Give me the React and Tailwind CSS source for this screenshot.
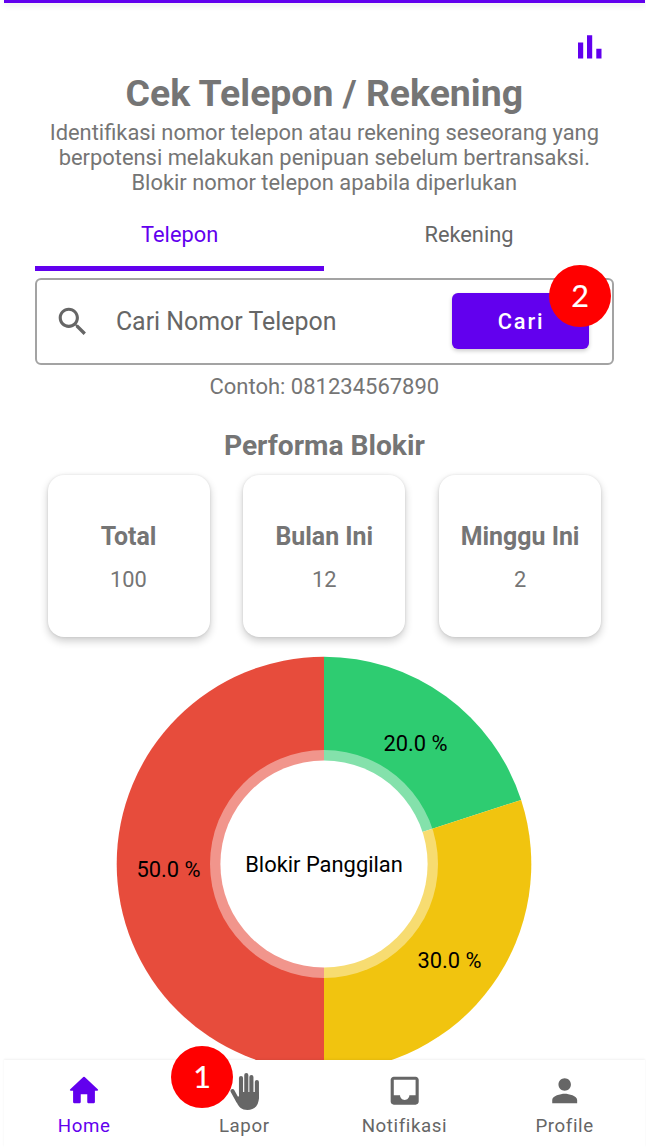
import React from "react";

const INK = "text-[#757575]";

function Badge({ children, className }) {
  return (
    <span
      className={`absolute z-20 flex h-[62px] w-[62px] items-center justify-center rounded-full bg-[#ff0000] pb-[1px] font-['Lato',sans-serif] text-[30.5px] leading-none text-white [-webkit-text-stroke:0.2px_white] ${className}`}
    >
      {children}
    </span>
  );
}

function StatCard({ title, value }) {
  return (
    <div className="flex h-[162px] w-[162px] flex-col items-center rounded-[16px] bg-white pt-[47px] shadow-[0_4px_8px_rgba(0,0,0,0.2),0_0_3px_rgba(0,0,0,0.1)]">
      <div className="text-[24.9px] leading-[29px] font-bold whitespace-nowrap">{title}</div>
      <div className="mt-[16px] text-[21.8px] leading-[26px]">{value}</div>
    </div>
  );
}

function Donut() {
  return (
    <svg className="block h-[416px] w-[416px]" viewBox="-208 -208 416 416">
      <path d="M0 0V-207.3A207.3 207.3 0 0 0 0 207.3Z" fill="#e74c3c" />
      <path d="M0 0V-207.3A207.3 207.3 0 0 1 197.15 -64.06Z" fill="#2ecc71" />
      <path d="M0 0L197.15 -64.06A207.3 207.3 0 0 1 0 207.3Z" fill="#f1c40f" />
      <circle r="114" fill="#fff" fillOpacity="0.41" />
      <circle r="103.6" fill="#fff" />
      <g fontSize="21.9" textAnchor="middle" fill="#000">
        <text x="91.5" y="-113.5">20.0 %</text>
        <text x="125.5" y="103.5">30.0 %</text>
        <text x="-155.5" y="12.5">50.0 %</text>
        <text x="0" y="7.5">Blokir Panggilan</text>
      </g>
    </svg>
  );
}

function NavItem({ label, active, children, badge }) {
  return (
    <div className={`relative flex flex-1 flex-col items-center pt-[12px] ${active ? "text-[#6200ee]" : "text-[#666666]"}`}>
      <div className="flex h-[38px] items-center justify-center">{children}</div>
      <div className="mt-[5px] text-[18.7px] leading-[22px] tracking-[0.6px]">{label}</div>
      {badge}
    </div>
  );
}

function Icon({ d, className }) {
  return (
    <svg viewBox="0 0 24 24" preserveAspectRatio="none" fill="currentColor" className={className}>
      <path d={d} />
    </svg>
  );
}

export default function App() {
  return (
    <div className={`flex h-[1147px] w-[646px] flex-col overflow-hidden bg-white pr-[1.4px] pl-[4px] font-['Roboto',sans-serif] ${INK}`}>
      <div className="h-[2.5px] shrink-0 bg-[#6200ee] shadow-[0_2px_6px_rgba(0,0,0,0.12)]" />
      <main className="flex h-[1057px] shrink-0 flex-col overflow-hidden">
        <div className="flex h-[68px] shrink-0 justify-end pt-[32.5px] pr-[42.5px]">
          <Icon className="h-[24px] w-[24px] text-[#6200ee]" d="M0 7.500h5.200v16H0zM9 .3h5.200v23.200H9zM18.300 13.700h5.200v9.800h-5.200z" />
        </div>
        <h1 className="text-center text-[37.4px] leading-[44px] font-bold">Cek Telepon / Rekening</h1>
        <p className="mt-[5px] text-center text-[21.9px] leading-[25.4px]">
          Identifikasi nomor telepon atau rekening seseorang yang
          <br />
          berpotensi melakukan penipuan sebelum bertransaksi.
          <br />
          Blokir nomor telepon apabila diperlukan
        </p>
        <div className="mt-[4px] flex h-[71px] shrink-0 px-[31px] text-center text-[21.8px] leading-[70px]">
          <div className="h-full flex-1 border-b-[5px] border-[#6200ee] text-[#6200ee]">Telepon</div>
          <div className="flex-1 text-[#666666]">Rekening</div>
        </div>
        <div className="relative mx-[31px] mt-[7px] flex h-[87px] shrink-0 items-center rounded-[6px] border-2 border-[#a3a3a3] pl-[16.5px]">
          <Icon
            className="h-[37.4px] w-[37.4px] text-[#666666]"
            d="M15.5 14h-.79l-.28-.27C15.41 12.59 16 11.11 16 9.5 16 5.91 13.09 3 9.5 3S3 5.91 3 9.5 5.91 16 9.5 16c1.61 0 3.09-.59 4.23-1.57l.27.28v.79l5 4.99L20.49 19l-4.99-5zm-6 0C7.01 14 5 11.99 5 9.5S7.01 5 9.5 5 14 7.01 14 9.5 11.99 14 9.5 14z"
          />
          <span className="ml-[25px] flex-1 text-[24.9px] text-[#666666]">Cari Nomor Telepon</span>
          <button className="mr-[23px] h-[56px] w-[137px] rounded-[6px] bg-[#6200ee] pt-[2px] pl-[2px] text-[21.8px] font-medium tracking-[1.9px] text-white shadow-[0_2px_4px_rgba(0,0,0,0.2)]">
            Cari
          </button>
          <Badge className="-top-[15px] right-[0.5px]">2</Badge>
        </div>
        <div className="mt-[9px] text-center text-[22px] leading-[26px]">Contoh: 081234567890</div>
        <h2 className="mt-[29px] text-center text-[28.2px] leading-[33px] font-bold">Performa Blokir</h2>
        <div className="mt-[13px] flex shrink-0 justify-between pr-[43.5px] pl-[43.5px]">
          <StatCard title="Total" value="100" />
          <StatCard title="Bulan Ini" value="12" />
          <StatCard title="Minggu Ini" value="2" />
        </div>
        <div className="mt-[19px] flex shrink-0 justify-center">
          <Donut />
        </div>
      </main>
      <nav className="relative flex flex-1 bg-white shadow-[0_-1px_2px_rgba(0,0,0,0.06)]">
        <NavItem label="Home" active>
          <Icon
            className="h-[37.4px] w-[34px]"
            d="M9.700 19.300v-5h4.600v5c0 .4.3.7.7.7h4c.4 0 .7-.3.7-.7V12H21.300c.7 0 .9-.5.4-.9L12.500 3.200a.8.8 0 0 0-1 0L2.300 11.100c-.5.4-.3.9.4.9h1.600v7.300c0 .4.3.7.7.7h4c.4 0 .7-.3.7-.7z"
          />
        </NavItem>
        <NavItem label="Lapor" badge={<Badge className="-top-[14px] left-[7px]">1</Badge>}>
          <svg viewBox="0 0 30 38" className="ml-[2px] h-[38px] w-[30px]" fill="none" stroke="currentColor" strokeLinecap="round">
            <path d="M11 6V22M16.300 3V22M21.400 5V22M26.900 10V26" strokeWidth="4.100" />
            <path d="M2.500 19L8 29" strokeWidth="4" />
            <path d="M9 20H28.950V25C28.950 33.500 24.500 38 17.500 38C11.500 38 9 35 7 31L5.500 27L9 24Z" fill="currentColor" stroke="none" />
          </svg>
        </NavItem>
        <NavItem label="Notifikasi">
          <Icon className="h-[37.4px] w-[37.4px]" d="M19 3H5c-1.100 0-2 .9-2 2v14c0 1.100.89 2 2 2h14c1.100 0 2-.9 2-2V5c0-1.100-.9-2-2-2zm0 12h-4c0 1.660-1.350 3-3 3s-3-1.340-3-3H5V5h14v10z" />
        </NavItem>
        <NavItem label="Profile">
          <Icon className="h-[37.4px] w-[37.4px]" d="M12 12c2.210 0 4-1.790 4-4s-1.790-4-4-4-4 1.790-4 4 1.790 4 4 4zm0 2c-2.670 0-8 1.340-8 4v2h16v-2c0-2.660-5.330-4-8-4z" />
        </NavItem>
      </nav>
    </div>
  );
}
